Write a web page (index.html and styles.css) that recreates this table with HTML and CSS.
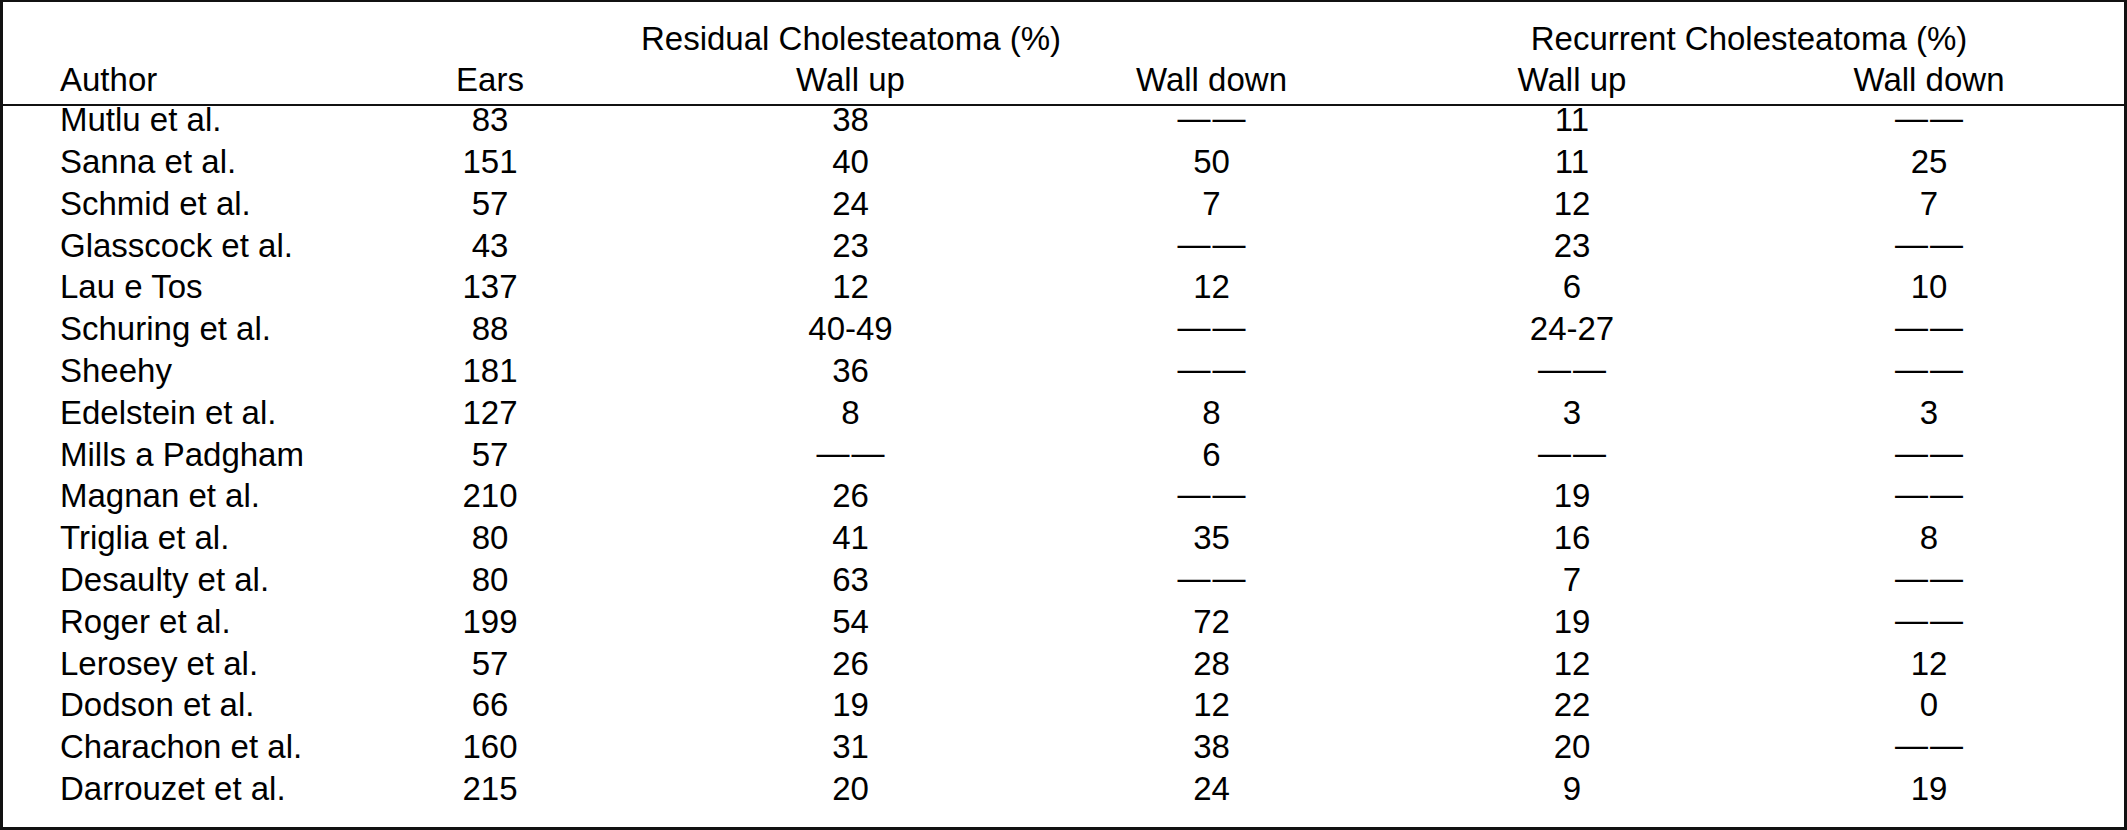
FILE: index.html
```html
<!DOCTYPE html>
<html lang="en">
<head>
<meta charset="utf-8">
<title>Residual and recurrent cholesteatoma</title>
<link rel="stylesheet" href="styles.css">
</head>
<body>
<div class="frame" role="table">
  <div class="thead" role="rowgroup">
    <div class="row group" role="row">
      <div class="cell" role="columnheader"></div>
      <div class="cell c span3" role="columnheader">Residual Cholesteatoma (%)</div>
      <div class="cell c span2 last" role="columnheader">Recurrent Cholesteatoma (%)</div>
    </div>
    <div class="row sub" role="row">
      <div class="cell author" role="columnheader">Author</div>
      <div class="cell c" role="columnheader">Ears</div>
      <div class="cell c" role="columnheader">Wall up</div>
      <div class="cell c" role="columnheader">Wall down</div>
      <div class="cell c" role="columnheader">Wall up</div>
      <div class="cell c last" role="columnheader">Wall down</div>
    </div>
  </div>
  <div class="tbody" role="rowgroup">
    <div class="row body" role="row"><div class="cell author">Mutlu et al.</div><div class="cell c">83</div><div class="cell c">38</div><div class="cell c"><span class="dash">——</span></div><div class="cell c">11</div><div class="cell c last"><span class="dash">——</span></div></div>
    <div class="row body" role="row"><div class="cell author">Sanna et al.</div><div class="cell c">151</div><div class="cell c">40</div><div class="cell c">50</div><div class="cell c">11</div><div class="cell c last">25</div></div>
    <div class="row body" role="row"><div class="cell author">Schmid et al.</div><div class="cell c">57</div><div class="cell c">24</div><div class="cell c">7</div><div class="cell c">12</div><div class="cell c last">7</div></div>
    <div class="row body" role="row"><div class="cell author">Glasscock et al.</div><div class="cell c">43</div><div class="cell c">23</div><div class="cell c"><span class="dash">——</span></div><div class="cell c">23</div><div class="cell c last"><span class="dash">——</span></div></div>
    <div class="row body" role="row"><div class="cell author">Lau e Tos</div><div class="cell c">137</div><div class="cell c">12</div><div class="cell c">12</div><div class="cell c">6</div><div class="cell c last">10</div></div>
    <div class="row body" role="row"><div class="cell author">Schuring et al.</div><div class="cell c">88</div><div class="cell c">40-49</div><div class="cell c"><span class="dash">——</span></div><div class="cell c">24-27</div><div class="cell c last"><span class="dash">——</span></div></div>
    <div class="row body" role="row"><div class="cell author">Sheehy</div><div class="cell c">181</div><div class="cell c">36</div><div class="cell c"><span class="dash">——</span></div><div class="cell c"><span class="dash">——</span></div><div class="cell c last"><span class="dash">——</span></div></div>
    <div class="row body" role="row"><div class="cell author">Edelstein et al.</div><div class="cell c">127</div><div class="cell c">8</div><div class="cell c">8</div><div class="cell c">3</div><div class="cell c last">3</div></div>
    <div class="row body" role="row"><div class="cell author">Mills a Padgham</div><div class="cell c">57</div><div class="cell c"><span class="dash">——</span></div><div class="cell c">6</div><div class="cell c"><span class="dash">——</span></div><div class="cell c last"><span class="dash">——</span></div></div>
    <div class="row body" role="row"><div class="cell author">Magnan et al.</div><div class="cell c">210</div><div class="cell c">26</div><div class="cell c"><span class="dash">——</span></div><div class="cell c">19</div><div class="cell c last"><span class="dash">——</span></div></div>
    <div class="row body" role="row"><div class="cell author">Triglia et al.</div><div class="cell c">80</div><div class="cell c">41</div><div class="cell c">35</div><div class="cell c">16</div><div class="cell c last">8</div></div>
    <div class="row body" role="row"><div class="cell author">Desaulty et al.</div><div class="cell c">80</div><div class="cell c">63</div><div class="cell c"><span class="dash">——</span></div><div class="cell c">7</div><div class="cell c last"><span class="dash">——</span></div></div>
    <div class="row body" role="row"><div class="cell author">Roger et al.</div><div class="cell c">199</div><div class="cell c">54</div><div class="cell c">72</div><div class="cell c">19</div><div class="cell c last"><span class="dash">——</span></div></div>
    <div class="row body" role="row"><div class="cell author">Lerosey et al.</div><div class="cell c">57</div><div class="cell c">26</div><div class="cell c">28</div><div class="cell c">12</div><div class="cell c last">12</div></div>
    <div class="row body" role="row"><div class="cell author">Dodson et al.</div><div class="cell c">66</div><div class="cell c">19</div><div class="cell c">12</div><div class="cell c">22</div><div class="cell c last">0</div></div>
    <div class="row body" role="row"><div class="cell author">Charachon et al.</div><div class="cell c">160</div><div class="cell c">31</div><div class="cell c">38</div><div class="cell c">20</div><div class="cell c last"><span class="dash">——</span></div></div>
    <div class="row body" role="row"><div class="cell author">Darrouzet et al.</div><div class="cell c">215</div><div class="cell c">20</div><div class="cell c">24</div><div class="cell c">9</div><div class="cell c last">19</div></div>
  </div>
</div>
</body>
</html>
```
FILE: styles.css
```css
html, body {
  margin: 0;
  padding: 0;
  background: #ffffff;
}

.frame {
  box-sizing: border-box;
  width: 2127px;
  height: 830px;
  border-style: solid;
  border-color: #111111;
  border-width: 2px 3px 3px 3px;
  background: #ffffff;
  color: #000000;
  font-family: "Liberation Sans", Arial, Helvetica, sans-serif;
  font-size: 33px;
  line-height: 24px;
}

.row {
  display: grid;
  grid-template-columns: 307px 360px 361px 361px 360px 1fr;
}

.cell {
  white-space: nowrap;
}

.cell.c {
  text-align: center;
}

.cell.author {
  padding-left: 57px;
}

.cell.last {
  padding-right: 18px;
}

.span3 {
  grid-column: span 3;
}

.span2 {
  grid-column: span 2;
}

.thead {
  border-bottom: 2px solid #111111;
}

.group .cell {
  padding-top: 25px;
  padding-bottom: 17px;
}

.sub .cell {
  padding-bottom: 12px;
}

.body .cell {
  padding-top: 2.3px;
  padding-bottom: 15.5px;
}

.dash {
  line-height: 0;
  vertical-align: 2px;
  letter-spacing: 2px;
  margin-right: -2px;
}
```
